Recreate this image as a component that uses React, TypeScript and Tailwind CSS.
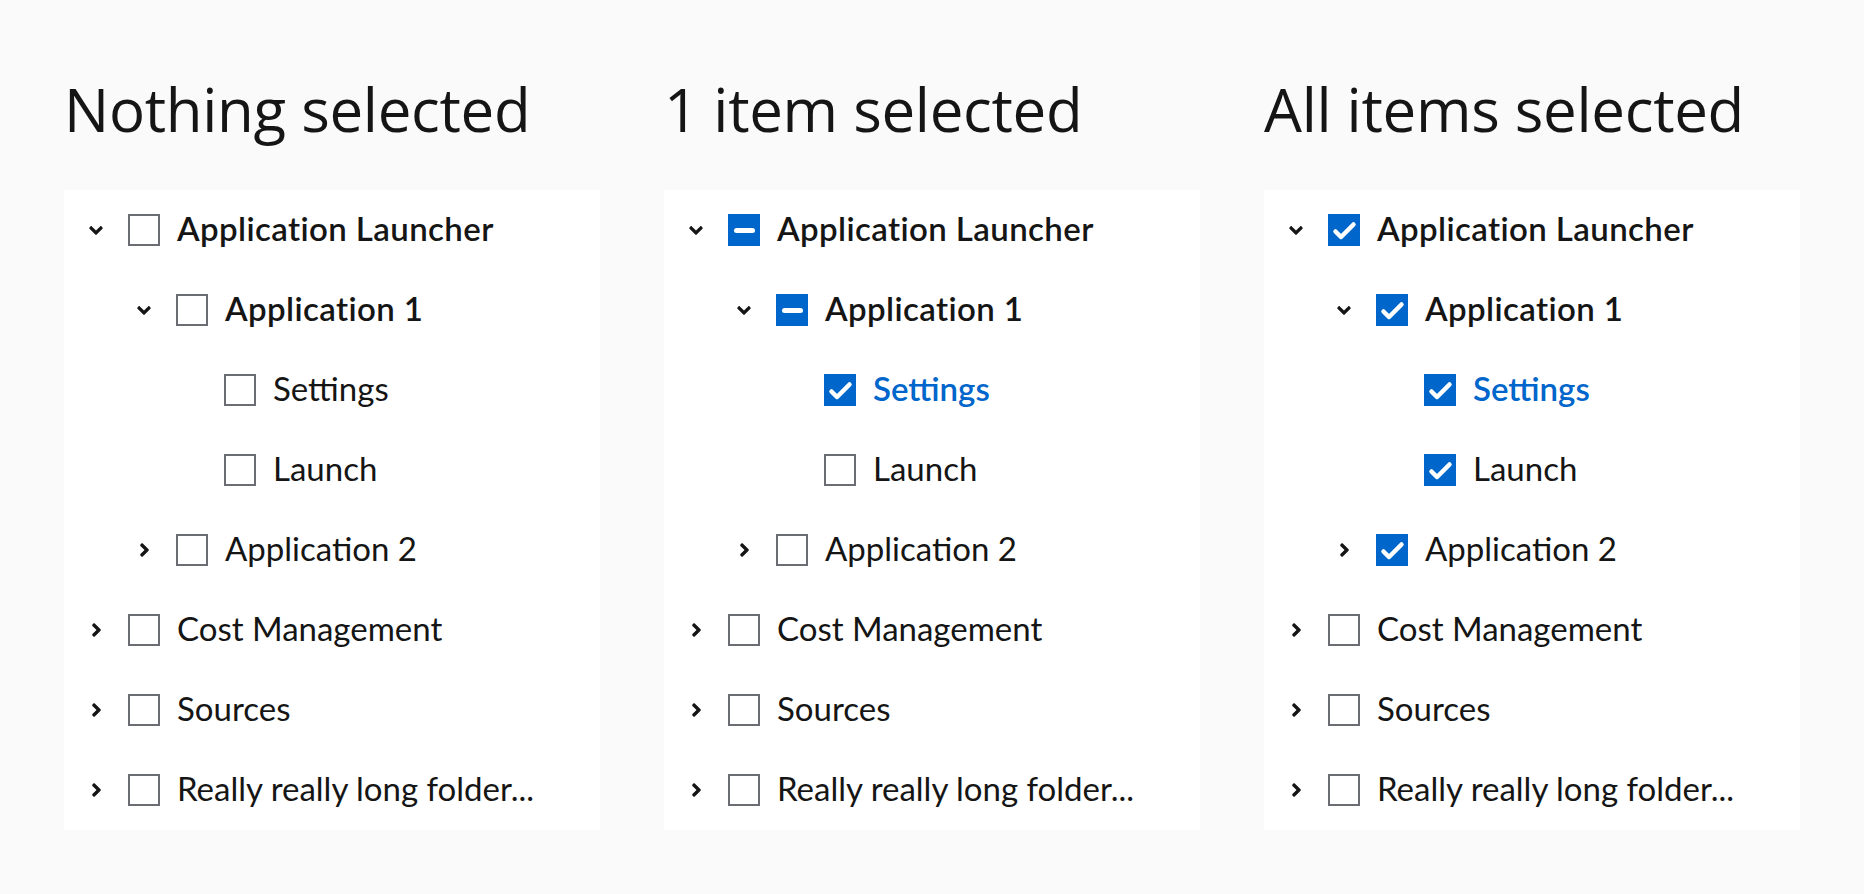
import React from 'react';

type CheckState = 'none' | 'partial' | 'checked';

interface Node {
  label: string;
  level: number;
  toggle?: 'open' | 'closed';
  state: CheckState;
  emphasis?: 'bold' | 'selected';
}

function AngleDown() {
  return (
    <svg width="14" height="9" viewBox="-3 150 326 212" fill="#151515">
      <path d="M143 352.3L7 216.3c-9.4-9.4-9.4-24.6 0-33.9l22.6-22.6c9.4-9.4 24.6-9.4 33.9 0l96.4 96.4 96.4-96.4c9.4-9.4 24.6-9.4 33.9 0l22.6 22.6c9.4 9.4 9.4 24.6 0 33.9l-136 136c-9.2 9.4-24.4 9.4-33.8 0z" />
    </svg>
  );
}

function AngleRight() {
  return (
    <svg width="9" height="14" viewBox="22 94 212 324" fill="#151515">
      <path d="M224.3 273l-136 136c-9.4 9.4-24.6 9.4-33.9 0l-22.6-22.6c-9.4-9.4-9.4-24.6 0-33.9l96.4-96.4-96.4-96.4c-9.4-9.4-9.4-24.6 0-33.9L54.3 103c9.4-9.4 24.6-9.4 33.9 0l136 136c9.5 9.4 9.5 24.6.1 34z" />
    </svg>
  );
}

function Checkbox({ state }: { state: CheckState }) {
  if (state === 'none') {
    return <div className="w-[32px] h-[32px] shrink-0 border-2 border-[#6a6e73] bg-white" />;
  }
  return (
    <div className="w-[32px] h-[32px] shrink-0 bg-[#0066cc] flex items-center justify-center">
      {state === 'checked' ? (
        <svg width="32" height="32" viewBox="0 0 32 32">
          <polyline
            points="7.5,17.5 13,23 25.5,10.5"
            fill="none"
            stroke="white"
            strokeWidth="4.5"
            strokeLinecap="round"
            strokeLinejoin="round"
          />
        </svg>
      ) : (
        <div className="w-[21px] h-[5px] rounded-full bg-white" />
      )}
    </div>
  );
}

function TreeRow({ node }: { node: Node }) {
  const textClass =
    node.emphasis === 'selected'
      ? 'text-[#0066cc] font-semibold'
      : node.emphasis === 'bold'
        ? 'text-[#151515] font-semibold tracking-[0.4px]'
        : 'text-[#151515] font-normal';

  return (
    <div
      className="h-[80px] flex items-center"
      style={{ paddingLeft: 16 + node.level * 48 }}
    >
      <div className="w-[32px] h-[32px] flex items-center justify-center shrink-0">
        {node.toggle === 'open' && <AngleDown />}
        {node.toggle === 'closed' && <AngleRight />}
      </div>
      <div className="ml-[16px] flex items-center gap-[17px] min-w-0">
        <Checkbox state={node.state} />
        <span
          className={`text-[33px] leading-none whitespace-nowrap pb-[4px] ${textClass}`}
          style={{ fontFamily: 'Lato, "Open Sans", sans-serif' }}
        >
          {node.label}
        </span>
      </div>
    </div>
  );
}

function buildTree(s: 'none' | 'one' | 'all'): Node[] {
  const top: CheckState = s === 'none' ? 'none' : s === 'one' ? 'partial' : 'checked';
  const settings: CheckState = s === 'none' ? 'none' : 'checked';
  const rest: CheckState = s === 'all' ? 'checked' : 'none';
  return [
    { label: 'Application Launcher', level: 0, toggle: 'open', state: top, emphasis: 'bold' },
    { label: 'Application 1', level: 1, toggle: 'open', state: top, emphasis: 'bold' },
    { label: 'Settings', level: 2, state: settings, emphasis: s === 'none' ? undefined : 'selected' },
    { label: 'Launch', level: 2, state: rest },
    { label: 'Application 2', level: 1, toggle: 'closed', state: rest },
    { label: 'Cost Management', level: 0, toggle: 'closed', state: 'none' },
    { label: 'Sources', level: 0, toggle: 'closed', state: 'none' },
    { label: 'Really really long folder...', level: 0, toggle: 'closed', state: 'none' },
  ];
}

const columns: { title: string; mode: 'none' | 'one' | 'all' }[] = [
  { title: 'Nothing selected', mode: 'none' },
  { title: '1 item selected', mode: 'one' },
  { title: 'All items selected', mode: 'all' },
];

export default function App() {
  return (
    <div
      className="w-[1864px] h-[894px] bg-[#fafafa] pt-[79px] px-[64px] overflow-hidden"
      style={{ fontFamily: '"Open Sans", "Noto Sans", sans-serif' }}
    >
      <div className="grid grid-cols-3 gap-[64px]">
        {columns.map((col) => (
          <div key={col.title}>
            <h2 className="text-[60px] leading-[60px] font-normal text-[#151515] mb-[51px] whitespace-nowrap tracking-[-0.3px]">
              {col.title}
            </h2>
            <div className="bg-white">
              {buildTree(col.mode).map((node) => (
                <TreeRow key={node.label} node={node} />
              ))}
            </div>
          </div>
        ))}
      </div>
    </div>
  );
}
